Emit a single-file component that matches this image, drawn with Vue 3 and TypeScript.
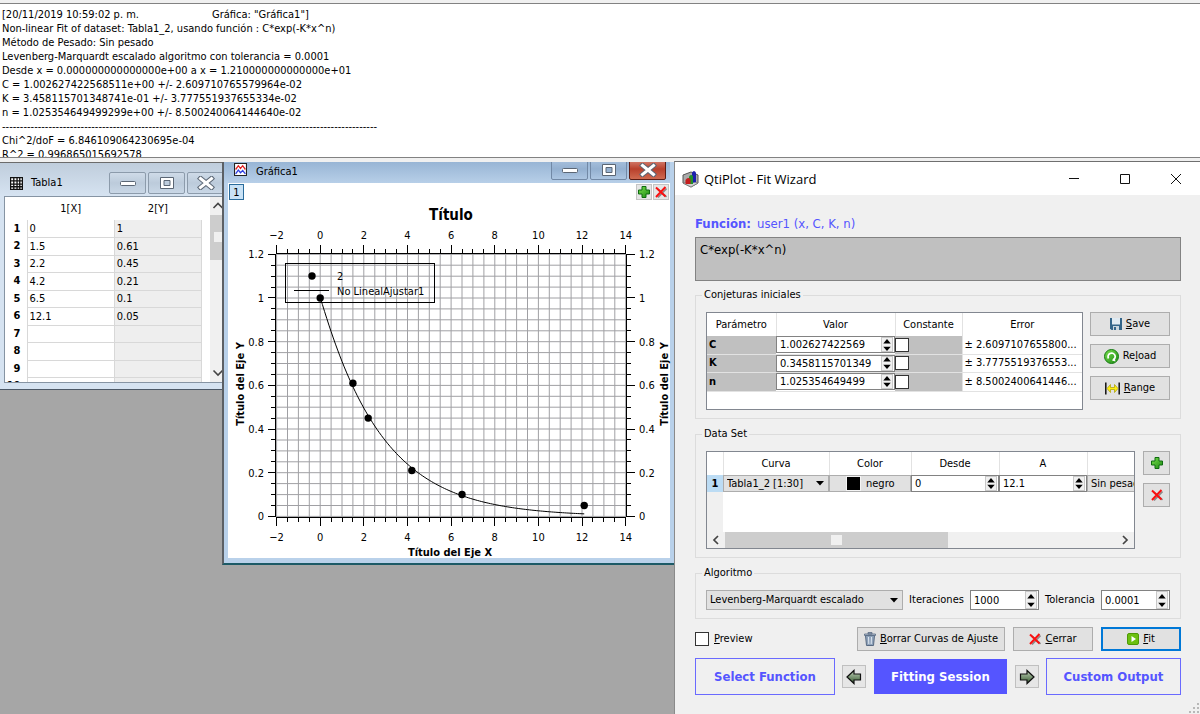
<script setup lang="ts">
import { ref } from 'vue'

const logLines: string[] = [
  '[20/11/2019 10:59:02 p. m.\t\tGráfica: "Gráfica1"]',
  'Non-linear Fit of dataset: Tabla1_2, usando función : C*exp(-K*x^n)',
  'Método de Pesado: Sin pesado',
  'Levenberg-Marquardt escalado algoritmo con tolerancia = 0.0001',
  'Desde x = 0.000000000000000e+00 a x = 1.210000000000000e+01',
  'C = 1.002627422568511e+00 +/- 2.609710765579964e-02',
  'K = 3.458115701348741e-01 +/- 3.777551937655334e-02',
  'n = 1.025354649499299e+00 +/- 8.500240064144640e-02',
  '-'.repeat(105),
  'Chi^2/doF = 6.846109064230695e-04',
  'R^2 = 0.996865015692578',
]

const rows: [string, string][] = [
  ['0', '1'], ['1.5', '0.61'], ['2.2', '0.45'], ['4.2', '0.21'], ['6.5', '0.1'],
  ['12.1', '0.05'], ['', ''], ['', ''], ['', ''], ['', ''],
]

const params = ref([
  { name: 'C', value: '1.002627422569', error: '± 2.6097107655800...', fixed: false },
  { name: 'K', value: '0.3458115701349', error: '± 3.7775519376553...', fixed: false },
  { name: 'n', value: '1.025354649499', error: '± 8.5002400641446...', fixed: false },
])

const formula = ref('C*exp(-K*x^n)')
const from = ref('0')
const to = ref('12.1')
const iterations = ref('1000')
const tolerance = ref('0.0001')
const preview = ref(false)

/* Plot geometry, in the coordinates of the plot's SVG */
const px = (v: number): number => 92.2 + 21.82 * v
const py = (v: number): number => 333.4 - 218.4 * v
const xMinor = Array.from({ length: 33 }, (_, i) => -2 + i * 0.5)
const xMajor = Array.from({ length: 9 }, (_, i) => -2 + i * 2)
const yMinor = Array.from({ length: 25 }, (_, i) => i * 0.05)
const yMajor = [0, 0.2, 0.4, 0.6, 0.8, 1, 1.2]
const gridPath =
  xMinor.map((v) => `M${px(v).toFixed(1)} 71V334`).join('') +
  yMinor.map((v) => `M48 ${py(v).toFixed(1)}H398`).join('')
const tickPath =
  xMinor.map((v) => {
    const long = Number.isInteger(v / 2)
    const x = Math.floor(px(v)) + 0.5
    return `M${x} 71v${long ? -9 : -5}M${x} 334v${long ? 9 : 5}`
  }).join('') +
  yMinor.map((v, i) => {
    const long = i % 4 === 0
    const y = Math.floor(py(v)) + 0.5
    return `M48 ${y}h${long ? -8 : -5}M398 ${y}h${long ? 9 : 5}`
  }).join('')
const points = rows
  .filter((r) => r[0] !== '')
  .map((r) => ({ x: px(Number(r[0])), y: py(Number(r[1])) }))
const curve = Array.from({ length: 122 }, (_, i) => i / 10)
  .map((x) => `${px(x).toFixed(2)},${py(1.002627 * Math.exp(-0.3458116 * Math.pow(x, 1.0253546))).toFixed(2)}`)
  .join(' ')
const label = (v: number): string => (v < 0 ? `−${-v}` : String(v))
</script>

<template>
  <main class="app">
    <svg class="defs" aria-hidden="true">
      <defs>
        <linearGradient id="green" x1="0" y1="0" x2="1" y2="1">
          <stop offset="0" stop-color="#7be04e" /><stop offset="1" stop-color="#1b8a12" />
        </linearGradient>
        <linearGradient id="arrowFill" x1="0" y1="0" x2="0" y2="1">
          <stop offset="0" stop-color="#c2d3bb" /><stop offset="1" stop-color="#35592f" />
        </linearGradient>
        <symbol id="plus" viewBox="0 0 12 12">
          <path d="M4 .5h4V4h3.500v4H8v3.500H4V8H.5V4H4z" fill="url(#green)" stroke="#0e6b10" />
        </symbol>
        <symbol id="cross" viewBox="0 0 12 12">
          <path d="M3 3l8.500 8M11.500 2.500L3 11.500" stroke="#8a8a8a" stroke-width="1.600" fill="none" />
          <path d="M1 1.500l9.500 9M10.500 1L1 11" stroke="#fa1010" stroke-width="2" fill="none" />
        </symbol>
        <symbol id="arrowLeft" viewBox="0 0 16 16">
          <path d="M1 8l7-6.500v3.500h6.500v6H8v3.500z" fill="url(#arrowFill)" stroke="#111" stroke-width="1.200" />
        </symbol>
        <symbol id="stepUp" viewBox="0 0 6 4"><path d="M0 3.500h6L3 0z" /></symbol>
        <symbol id="stepDown" viewBox="0 0 6 4"><path d="M0 .5h6L3 4z" /></symbol>
        <symbol id="winMin" viewBox="0 0 16 12">
          <rect x=".5" y="4.500" width="15" height="4" rx="1" fill="#fff" stroke="#5b6674" />
        </symbol>
        <symbol id="winMax" viewBox="0 0 16 12">
          <path fill-rule="evenodd" d="M1.500.5h13v11h-13zM5 3.500h6v5H5z" fill="#fff" stroke="#5b6674" />
        </symbol>
        <symbol id="winClose" viewBox="0 0 18 14">
          <path d="M3.500 2.500l11 9M14.500 2.500l-11 9" stroke="#5b6674" stroke-width="5" stroke-linecap="square" />
          <path d="M3.500 2.500l11 9M14.500 2.500l-11 9" stroke="#fff" stroke-width="3" stroke-linecap="square" />
        </symbol>
      </defs>
    </svg>

    <section class="log" aria-label="Results log">
      <p v-for="(line, i) in logLines" :key="i">{{ line }}</p>
    </section>

    <section class="mdi">
      <!-- Tabla1 -->
      <article class="win table-win">
        <header class="win-bar">
          <svg class="win-icon" viewBox="0 0 12 12"><path d="M.5.5h11v11H.5zM3.500 1v10M6.500 1v10M9 1v10M1 3.500h10M1 6.500h10M1 9h10" fill="#fff" stroke="#111" stroke-width="1.200" /></svg>
          <h2>Tabla1</h2>
          <button aria-label="Minimize"><svg class="g16"><use href="#winMin" /></svg></button>
          <button aria-label="Maximize"><svg class="g16"><use href="#winMax" /></svg></button>
          <button aria-label="Close"><svg class="g18"><use href="#winClose" /></svg></button>
        </header>
        <div class="sheet-frame">
          <table class="sheet">
            <thead><tr><th></th><th>1[X]</th><th>2[Y]</th></tr></thead>
            <tbody>
              <tr v-for="(r, i) in rows" :key="i"><th>{{ i + 1 }}</th><td>{{ r[0] }}</td><td>{{ r[1] }}</td></tr>
            </tbody>
          </table>
          <div class="vscroll">
            <svg viewBox="0 0 12 10"><path d="M1.500 7L6 2.500 10.500 7" fill="none" stroke="#444" stroke-width="1.600" /></svg>
            <div class="vthumb"><i></i></div>
            <svg viewBox="0 0 12 10"><path d="M1.500 2.500L6 7l4.500-4.500" fill="none" stroke="#444" stroke-width="1.600" /></svg>
          </div>
        </div>
      </article>

      <!-- Gráfica1 -->
      <article class="win graph-win">
        <header class="win-bar active">
          <svg class="win-icon" viewBox="0 0 12 12"><path d="M.5.5h11v11H.5z" fill="#fff" stroke="#222" /><path d="M1.500 6L4 2.500 6 5l2-2.500L10.500 6" fill="none" stroke="#e02020" stroke-width="1.200" /><path d="M1.500 10L4 6.500 6 9l2-2 2.500 3" fill="none" stroke="#3040e0" stroke-width="1.200" /></svg>
          <h2>Gráfica1</h2>
          <button aria-label="Minimize"><svg class="g16"><use href="#winMin" /></svg></button>
          <button aria-label="Maximize"><svg class="g16"><use href="#winMax" /></svg></button>
          <button class="red" aria-label="Close"><svg class="g18"><use href="#winClose" /></svg></button>
        </header>
        <div class="graph-client">
          <div class="layer-bar">
            <button class="layer">1</button>
            <button class="tool" aria-label="Add layer"><svg class="i12"><use href="#plus" /></svg></button>
            <button class="tool" aria-label="Remove layer"><svg class="i12"><use href="#cross" /></svg></button>
          </div>
          <svg class="plot" viewBox="0 0 442 375" width="442" height="375">
            <path :d="gridPath" stroke="#a0a0a4" fill="none" />
            <path d="M47.500 71V334M398.500 71V334M48 70.500H398M48 334.500H398" stroke="#000" fill="none" />
            <path :d="tickPath" stroke="#000" fill="none" />
            <g text-anchor="middle">
              <template v-for="v in xMajor" :key="v">
                <text :x="px(v)" y="56">{{ label(v) }}</text>
                <text :x="px(v)" y="358">{{ label(v) }}</text>
              </template>
            </g>
            <g v-for="v in yMajor" :key="v">
              <text x="36" :y="py(v) + 4" text-anchor="end">{{ v }}</text>
              <text x="411" :y="py(v) + 4">{{ v }}</text>
            </g>
            <text class="title" x="223" y="37" text-anchor="middle">Título</text>
            <text class="bold" x="222" y="373" text-anchor="middle">Título del Eje X</text>
            <text class="bold" transform="translate(16 201) rotate(-90)" text-anchor="middle">Título del Eje Y</text>
            <text class="bold" transform="translate(440 201) rotate(-90)" text-anchor="middle">Título del Eje Y</text>
            <polyline :points="curve" fill="none" stroke="#000" />
            <circle v-for="(p, i) in points" :key="i" :cx="p.x" :cy="p.y" r="3.700" />
            <rect x="57.500" y="80.500" width="149" height="39" fill="none" stroke="#000" />
            <circle cx="84" cy="93" r="3.700" />
            <path d="M66 107.500h35" stroke="#000" />
            <text x="109" y="97">2</text>
            <text x="109" y="112">No LinealAjustar1</text>
          </svg>
        </div>
      </article>
    </section>

    <!-- Fit Wizard -->
    <section class="wizard" role="dialog" aria-labelledby="wizTitle">
      <header class="wiz-bar">
        <svg class="logo" viewBox="0 0 17 18">
          <path d="M1 5l8-3 7 3v8l-7 4-8-4z" fill="#aaa" stroke="#555" />
          <path d="M1 13l8 4 7-4-7-2z" fill="#d0d0d0" stroke="#777" stroke-width=".7" />
          <path d="M10 4V2.500Q12-.5 14 2.500V12l-4 1z" fill="#1b1fae" />
          <path d="M7 6.500Q9 4 11 6v8H7z" fill="#21902b" />
          <path d="M3.500 10Q6 6.500 8.500 9.500V14h-5z" fill="#c51d1d" />
        </svg>
        <h1 id="wizTitle">QtiPlot - Fit Wizard</h1>
        <button aria-label="Minimize"><svg viewBox="0 0 12 12"><path d="M1 5.500h10" stroke="#111" /></svg></button>
        <button aria-label="Maximize"><svg viewBox="0 0 12 12"><path d="M1.500 1.500h9v9h-9z" fill="none" stroke="#111" /></svg></button>
        <button aria-label="Close"><svg viewBox="0 0 12 12"><path d="M1 1l10 10M11 1L1 11" stroke="#111" fill="none" /></svg></button>
      </header>

      <div class="wiz-body">
        <p class="func"><label for="formula">Función:</label><span>user1 (x, C, K, n)</span></p>
        <textarea id="formula" v-model="formula" readonly></textarea>

        <fieldset class="guess">
          <legend>Conjeturas iniciales</legend>
          <div class="frame">
            <table class="grid params">
              <colgroup><col class="w69" /><col class="w119" /><col class="w67" /><col /></colgroup>
              <thead><tr><th>Parámetro</th><th>Valor</th><th>Constante</th><th>Error</th></tr></thead>
              <tbody>
                <tr v-for="p in params" :key="p.name">
                  <th>{{ p.name }}</th>
                  <td>
                    <div class="spin">
                      <input v-model="p.value" type="text" :aria-label="'Valor ' + p.name" />
                      <span class="steps"><button aria-label="Up"><svg><use href="#stepUp" /></svg></button><button aria-label="Down"><svg><use href="#stepDown" /></svg></button></span>
                    </div>
                  </td>
                  <td class="gray"><input v-model="p.fixed" type="checkbox" :aria-label="'Constante ' + p.name" /></td>
                  <td class="err">{{ p.error }}</td>
                </tr>
              </tbody>
            </table>
          </div>
          <div class="side">
            <button class="btn">
              <svg class="i12" viewBox="0 0 12 12"><path d="M0 0h12v12H1.500L0 10.500z" fill="#33658a" /><path d="M2 0h8v6.500H2z" fill="#dfeaf2" /><path d="M3 8h6v4H3z" fill="#c9d6df" /><path d="M4 9h2v3H4z" fill="#33658a" /></svg>
              <span><u>S</u>ave</span>
            </button>
            <button class="btn">
              <svg class="i15" viewBox="0 0 15 15"><circle cx="7.500" cy="7.500" r="7" fill="url(#green)" stroke="#167a14" /><path d="M4.500 9.500a3.600 3.600 0 1 1 4.500 1.500" fill="none" stroke="#fff" stroke-width="1.700" /><path d="M10.500 8L8 11.500l3.500 1z" fill="#fff" /></svg>
              <span>Re<u>l</u>oad</span>
            </button>
            <button class="btn">
              <svg class="i15" viewBox="0 0 15 12"><path d="M.8 0v12M14.200 0v12" stroke="#111" stroke-width="1.500" /><path d="M2 6l3.500-4v3h4V2L13 6l-3.500 4V7h-4v3z" fill="#ffee10" stroke="#a89c00" stroke-width=".7" /></svg>
              <span><u>R</u>ange</span>
            </button>
          </div>
        </fieldset>

        <fieldset class="data">
          <legend>Data Set</legend>
          <div class="frame">
            <table class="grid curves">
              <colgroup><col class="w16" /><col class="w106" /><col class="w82" /><col class="w88" /><col class="w88" /><col class="w106" /></colgroup>
              <thead><tr><th></th><th>Curva</th><th>Color</th><th>Desde</th><th>A</th><th></th></tr></thead>
              <tbody>
                <tr>
                  <th>1</th>
                  <td>
                    <div class="combo"><select aria-label="Curva"><option>Tabla1_2 [1:30]</option></select><svg viewBox="0 0 8 5"><path d="M0 0h8L4 4.500z" /></svg></div>
                  </td>
                  <td><button class="color"><i></i><span>negro</span></button></td>
                  <td>
                    <div class="spin"><input v-model="from" type="text" aria-label="Desde" /><span class="steps"><button aria-label="Up"><svg><use href="#stepUp" /></svg></button><button aria-label="Down"><svg><use href="#stepDown" /></svg></button></span></div>
                  </td>
                  <td>
                    <div class="spin"><input v-model="to" type="text" aria-label="A" /><span class="steps"><button aria-label="Up"><svg><use href="#stepUp" /></svg></button><button aria-label="Down"><svg><use href="#stepDown" /></svg></button></span></div>
                  </td>
                  <td><div class="combo"><select aria-label="Pesado"><option>Sin pesado</option></select></div></td>
                </tr>
              </tbody>
            </table>
            <div class="gutter"></div>
            <div class="hscroll">
              <svg viewBox="0 0 10 12"><path d="M7 2L3 6l4 4" fill="none" stroke="#444" stroke-width="1.700" /></svg>
              <div class="track"><div class="hthumb"><i></i></div></div>
              <svg viewBox="0 0 10 12"><path d="M3 2l4 4-4 4" fill="none" stroke="#444" stroke-width="1.700" /></svg>
            </div>
          </div>
          <div class="side">
            <button class="btn" aria-label="Add curve"><svg class="i12"><use href="#plus" /></svg></button>
            <button class="btn" aria-label="Remove curve"><svg class="i12"><use href="#cross" /></svg></button>
          </div>
        </fieldset>

        <fieldset class="algo">
          <legend>Algoritmo</legend>
          <div class="combo"><select aria-label="Algoritmo"><option>Levenberg-Marquardt escalado</option></select><svg viewBox="0 0 8 5"><path d="M0 0h8L4 4.500z" /></svg></div>
          <label for="iter">Iteraciones</label>
          <div class="spin"><input id="iter" v-model="iterations" type="text" /><span class="steps"><button aria-label="Up"><svg><use href="#stepUp" /></svg></button><button aria-label="Down"><svg><use href="#stepDown" /></svg></button></span></div>
          <label for="tol">Tolerancia</label>
          <div class="spin"><input id="tol" v-model="tolerance" type="text" /><span class="steps"><button aria-label="Up"><svg><use href="#stepUp" /></svg></button><button aria-label="Down"><svg><use href="#stepDown" /></svg></button></span></div>
        </fieldset>

        <div class="actions">
          <label class="preview"><input v-model="preview" type="checkbox" /><span><u>P</u>review</span></label>
          <button class="btn wide">
            <svg class="trash" viewBox="0 0 12 14"><path d="M1.500 3.500h9l-1 10h-7z" fill="#8fa3bb" stroke="#566880" /><path d="M4.500 5l.3 7M7.500 5l-.3 7" stroke="#dfe7f0" /><path d="M.5 2h11v1.500H.5zM4 .5h4V2H4z" fill="#b7c4d4" stroke="#566880" stroke-width=".8" /></svg>
            <span><u>B</u>orrar Curvas de Ajuste</span>
          </button>
          <button class="btn"><svg class="i12"><use href="#cross" /></svg><span><u>C</u>errar</span></button>
          <button class="btn default">
            <svg class="i12" viewBox="0 0 12 12"><rect x=".5" y=".5" width="11" height="11" rx="1.500" fill="#6cc010" stroke="#4e9a06" /><path d="M4.500 3v6L9 6z" fill="#fff" /></svg>
            <span><u>F</u>it</span>
          </button>
        </div>

        <nav class="steps-nav">
          <button class="step">Select Function</button>
          <button class="nav-arrow" aria-label="Previous"><svg class="i16"><use href="#arrowLeft" /></svg></button>
          <button class="step current">Fitting Session</button>
          <button class="nav-arrow next" aria-label="Next"><svg class="i16"><use href="#arrowLeft" /></svg></button>
          <button class="step">Custom Output</button>
        </nav>
      </div>
      <svg class="grip" viewBox="0 0 10 10"><path d="M8 0h2v2H8zM8 4h2v2H8zM8 8h2v2H8zM4 4h2v2H4zM4 8h2v2H4zM0 8h2v2H0z" fill="#b8b8b8" /></svg>
    </section>
  </main>
</template>

<style>
body {
  background: #a6a6a6;
}
</style>

<style scoped>
.app {
  --ui: 'DejaVu Sans Condensed', 'Noto Sans', sans-serif;
  position: relative;
  display: flex;
  flex-direction: column;
  min-height: 100vh;
  overflow: hidden;
  background: #f0f0f0;
  color: #000;
  font: 11px/14px var(--ui);
}
.app *, .app *::before { box-sizing: border-box; }
.defs { position: absolute; width: 0; height: 0; }
p, h1, h2 { margin: 0; font: inherit; }
button, input, select, textarea { margin: 0; padding: 0; border: 0; border-radius: 0; color: inherit; font: inherit; }
svg { flex: none; display: block; }
table { border-collapse: collapse; table-layout: fixed; }
th, td { padding: 0; font-weight: 400; text-align: center; }
u { text-underline-offset: 1px; }
.g16 { width: 16px; height: 12px; }
.g18 { width: 18px; height: 14px; }
.i12 { width: 12px; height: 12px; }
.i15 { width: 15px; height: 15px; }
.i16 { width: 16px; height: 16px; }

.log {
  height: 155px;
  margin: 3px 0 4px;
  padding: 4px 2px 0;
  overflow: hidden;
  border-top: 1px solid #828282;
  border-bottom: 1px solid #828282;
  background: #fff;
  white-space: pre;
  tab-size: 70px;
}

.mdi { position: relative; flex: 1; overflow: hidden; background: #a6a6a6; }
.win { position: absolute; display: flex; flex-direction: column; }
.win-bar { display: flex; align-items: center; }
.win-bar h2 { flex: 1; }
.win-icon { width: 13px; height: 13px; margin-right: 8px; }
.win-bar button {
  display: flex;
  align-items: center;
  justify-content: center;
  width: 37px;
  height: 22px;
  margin-left: 2px;
  border: 1px solid #8c9bab;
  border-radius: 2px;
  background: linear-gradient(#cfdbe8, #bccbdb 50%, #c9d7e6);
}

.table-win {
  top: 0;
  left: 0;
  width: 224px;
  height: 228px;
  padding: 0 0 6px 4px;
  border-top: 1px solid #6b6b6b;
  border-bottom: 1px solid #4c5866;
  background: #d6e3f1;
}
.table-win .win-bar {
  height: 33px;
  margin-left: -4px;
  padding: 7px 0 0 10px;
  background: linear-gradient(#bfcddc, #d6e3f1);
}
.sheet-frame {
  display: flex;
  flex: 1;
  min-height: 0;
  overflow: hidden;
  border: 1px solid #8694a3;
  border-right: 0;
  background: #fff;
}
.sheet { width: 197px; height: 0; margin-right: 8px; }
.sheet thead th { height: 23px; }
.sheet tbody tr { height: 17px; }
.sheet tbody tr:nth-child(even) { height: 18px; }
.sheet th:first-child { width: 22px; padding-right: 6px; font-weight: 700; }
.sheet tbody th { text-align: right; }
.sheet td { padding-left: 2px; border: 1px solid #d8d8d8; border-top: 0; text-align: left; line-height: 13px; }
.sheet td:last-child { background: #eee; }
.vscroll {
  display: flex;
  flex: 1;
  flex-direction: column;
  padding: 4px 0;
  background: #f0f0f0;
  overflow: hidden;
}
.vscroll svg { width: 12px; height: 10px; margin-left: 2px; }
.vthumb { height: 45px; margin: 4px 0 auto; padding: 17px 0 0 4px; background: #cdcdcd; }
.vthumb i { display: block; height: 10px; background: #f0f0f0; }

.graph-win {
  top: -4px;
  left: 222px;
  width: 453px;
  height: 407px;
  padding: 0 4px 5px 4px;
  border: 1px solid #4a4a4a;
  border-left: 2px solid #5c6065;
  border-bottom: 2px solid #1c5a66;
  background: #b9d1ea;
}
.win-bar.active { height: 24px; margin-left: -4px; padding: 0 4px 4px 10px; background: linear-gradient(#93b1d2, #b7cfe8); }
.win-bar.active .win-icon { margin-right: 9px; }
.win-bar.active h2 { padding-top: 5px; }
.win-bar.active button { border-color: #7289a6; background: linear-gradient(#a9c2de, #94b0d0 50%, #adc6e2); padding-top: 2px; }
.win-bar.active button.red { border-color: #5c1c14; background: linear-gradient(#d98a7c, #b8402c 50%, #cf6a50); }
.graph-client { position: relative; flex: 1; background: #fff; }
.layer-bar { position: absolute; inset: 1px 1px auto 1px; display: flex; gap: 1px; }
.layer { width: 15px; height: 16px; margin-right: auto; border: 1px solid #2a6c9c; background: #c9e2f6; line-height: 13px; }
.tool { display: grid; place-items: center; width: 16px; height: 16px; border: 1px solid #c4c4c4; background: #e6e6e6; }
.plot { overflow: visible; font: 11px var(--ui); fill: #000; }
.plot .bold { font-weight: 700; }
.plot .title { font-size: 15px; font-weight: 700; }

.wizard {
  position: absolute;
  inset: 161px 0 0 674px;
  display: flex;
  flex-direction: column;
  border-top: 1px solid #6f6f6f;
  border-left: 1px solid #8a8a8a;
  background: #f0f0f0;
}
.wiz-bar { display: flex; align-items: center; height: 33px; padding: 0 18px 0 7px; background: #fff; }
.logo { width: 17px; height: 18px; }
.wiz-bar h1 { flex: 1; padding-left: 5px; font: 13px/16px 'Open Sans', 'Noto Sans', sans-serif; }
.wiz-bar button { width: 12px; height: 12px; margin-left: 39px; background: none; }
.wiz-bar button svg { width: 12px; height: 12px; }
.wiz-body { display: flex; flex-direction: column; padding: 20px 19px 0 20px; }
.func { color: #5555ff; font-size: 13px; line-height: 18px; }
.func label { margin-right: 6px; font-weight: 700; }
textarea {
  width: 100%;
  height: 44px;
  margin: 4px 0 7px;
  padding: 4px;
  border: 1px solid #828282;
  background: #c0c0c0;
  font-size: 13px;
  line-height: 16px;
  resize: none;
  outline: 0;
}

fieldset { display: grid; min-width: 0; margin: 0 0 8px; padding: 10px 10px 8px; border: 1px solid #dcdcdc; }
legend { margin-left: -4px; padding: 0 2px; }
.guess { grid-template-columns: 1fr 80px; gap: 7px; }
.data { grid-template-columns: 1fr 27px; gap: 8px; }
.frame { display: flex; flex-direction: column; height: 98px; min-width: 0; overflow: hidden; border: 1px solid #828790; background: #fff; }
.side { display: flex; flex-direction: column; gap: 8px; }

.grid thead th { height: 23px; border-right: 1px solid #e2e2e2; }
.grid thead th:last-child { border-right: 0; }
.params { width: 100%; }
.params tbody tr { height: 18px; }
.params tbody tr:last-child { height: 19px; }
.params tbody th { padding-left: 2px; border-bottom: 1px solid #e2e2e2; background: #c0c0c0; font-weight: 700; text-align: left; }
.params td { border-bottom: 1px solid #e2e2e2; text-align: left; }
.params .gray { border-right: 1px solid #e2e2e2; background: #c0c0c0; }
.params .err { padding-left: 2px; white-space: nowrap; }
.params input[type='checkbox'] { display: block; }
.w69 { width: 69px; }
.w119 { width: 119px; }
.w67 { width: 67px; }
.w16 { width: 16px; }
.w106 { width: 106px; }
.w82 { width: 82px; }
.w88 { width: 88px; }
.curves { width: 486px; }
.curves tbody tr { height: 17px; }
.curves tbody th { background: #bcdcf4; font-weight: 700; }
.gutter { flex: 1; width: 16px; background: #f0f0f0; }

input[type='checkbox'] { appearance: none; width: 14px; height: 14px; border: 1px solid #333; background: #fff; }
.spin { display: flex; height: 17px; padding: 0 1px; border: 1px solid #828282; background: #fff; }
.spin input { flex: 1; width: 0; min-width: 0; height: 15px; padding-left: 2px; background: none; outline: 0; }
.steps { display: flex; flex-direction: column; width: 12px; border: 1px solid #c8c8c8; background: #f0f0f0; }
.steps button { display: grid; place-items: center; flex: 1; min-height: 0; background: #f0f0f0; }
.steps svg { width: 8px; height: 5px; }
.combo { display: flex; align-items: center; height: 17px; border: 1px solid #adadad; background: #e1e1e1; }
.combo select { flex: 1; min-width: 0; height: 100%; padding-left: 3px; appearance: none; background: none; outline: 0; line-height: 14px; }
.combo svg { width: 8px; height: 5px; margin-right: 4px; }
.color { display: flex; align-items: center; width: 100%; height: 17px; padding-left: 16px; border: 1px solid #adadad; background: #e1e1e1; }
.color i { width: 15px; height: 15px; margin-right: 5px; border: 1px solid #f4f4f4; background: #000; }
.hscroll { display: flex; align-items: center; height: 16px; background: #f0f0f0; }
.hscroll svg { width: 10px; height: 12px; margin: 0 4px; }
.track { flex: 1; height: 16px; }
.hthumb { width: 57%; height: 16px; padding-top: 3px; background: #cdcdcd; }
.hthumb i { display: block; width: 11px; height: 10px; margin: 0 auto; background: #f0f0f0; }

.algo { grid-template-columns: 197px auto 69px auto 69px; justify-content: space-between; align-items: center; }
.algo .combo, .algo .spin { height: 20px; }
.algo .spin input { height: 18px; }

.btn { display: flex; align-items: center; justify-content: center; gap: 4px; height: 24px; border: 1px solid #adadad; background: #e1e1e1; }
.actions { display: flex; gap: 8px; margin-bottom: 7px; }
.actions .btn { width: 80px; }
.actions .btn.wide { width: 148px; }
.actions .btn.default { border: 2px solid #0078d7; }
.trash { width: 12px; height: 14px; }
.preview { display: flex; align-items: center; gap: 5px; margin-right: auto; }
.steps-nav { display: grid; grid-template-columns: 29fr 24px 28fr 24px 28fr; gap: 7px; align-items: center; }
.step { height: 37px; border: 1px solid #6a6aff; background: #f0f0f0; color: #5555ff; font-size: 13px; font-weight: 700; }
.step.current { background: #5555ff; color: #fff; border-color: #f0f0f0; }
.nav-arrow { display: grid; place-items: center; width: 24px; height: 23px; border: 1px solid #c0c0c0; background: #e6e6e6; }
.nav-arrow.next svg { transform: scaleX(-1); }
.grip { position: absolute; right: 1px; bottom: 1px; width: 10px; height: 10px; }
</style>
